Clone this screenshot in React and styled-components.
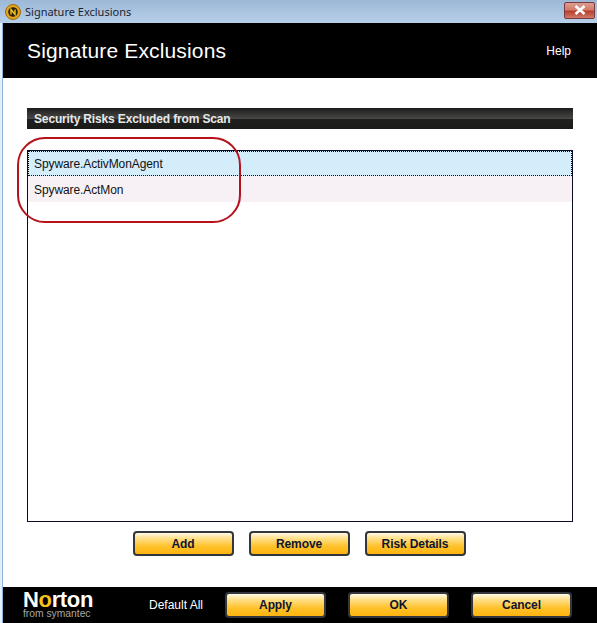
import React from "react";
import styled, { createGlobalStyle } from "styled-components";

const Global = createGlobalStyle`
  html, body { margin: 0; padding: 0; background: #fff; }
  body { font-family: "Liberation Sans", Arial, sans-serif; }
`;

const Frame = styled.div`
  position: relative;
  width: 597px;
  height: 623px;
  overflow: hidden;
  display: flex;
  flex-direction: column;
  background: #e6eef7;
`;

const TitleBar = styled.div`
  height: 23px;
  flex: none;
  display: flex;
  align-items: center;
  padding: 0 2px 0 5px;
  background: linear-gradient(to bottom, #9db8d6 0%, #b7cfe9 100%);
`;

const TitleText = styled.span`
  margin-left: 4px;
  font-family: "Noto Sans", sans-serif;
  font-size: 11px;
  color: #1c2430;
`;

const CloseButton = styled.div`
  margin-left: auto;
  width: 31px;
  height: 17px;
  margin-top: -3px;
  display: flex;
  align-items: center;
  justify-content: center;
  box-sizing: border-box;
  border: 1px solid #7a3a44;
  border-radius: 2px;
  background: linear-gradient(to bottom, #dc9d90 0%, #d27c6c 45%, #b9402c 55%, #cf7a68 100%);
`;

const Window = styled.div`
  flex: 1;
  margin-left: 2px;
  border-left: 1px solid #8fb2dc;
  display: flex;
  flex-direction: column;
  background: #fff;
`;

const Header = styled.header`
  height: 55px;
  flex: none;
  display: flex;
  align-items: center;
  justify-content: space-between;
  padding: 0 26px 0 24px;
  background: #000;
  color: #fff;
`;

const Heading = styled.h1`
  margin: 0;
  font-size: 21px;
  font-weight: 400;
  letter-spacing: 0.15px;
`;

const HelpLink = styled.span`
  font-size: 12px;
`;

const Content = styled.main`
  flex: 1;
  display: flex;
  flex-direction: column;
  padding: 30px 24px 0;
`;

const SectionBar = styled.div`
  height: 21px;
  flex: none;
  display: flex;
  align-items: center;
  padding-left: 7px;
  font-size: 12px;
  font-weight: 700;
  letter-spacing: -0.15px;
  color: #e8e8e8;
  background: linear-gradient(to bottom, #1d1e1c 0%, #474846 50%, #1f201e 52%, #1a1b19 100%);
`;

const List = styled.div`
  height: 372px;
  flex: none;
  margin-top: 21px;
  box-sizing: border-box;
  border: 1px solid #0b0b2a;
  background: #fff;
`;

const Row = styled.div`
  height: ${(p) => (p.$selected ? 25 : 26)}px;
  box-sizing: border-box;
  display: flex;
  align-items: center;
  padding: ${(p) => (p.$selected ? "0 0 0 6px" : "1px 0 0 6px")};
  font-size: 12px;
  letter-spacing: -0.1px;
  color: #111;
  background: ${(p) => (p.$selected ? "#d3edfb" : "#f7f1f6")};
  outline: ${(p) => (p.$selected ? "1px dotted #111" : "none")};
  outline-offset: -1px;
`;

const ActionRow = styled.div`
  display: flex;
  justify-content: center;
  gap: 15px;
  margin: 9px 2px 0 0;
`;

const Button = styled.button`
  width: 101px;
  height: ${(p) => p.$h || 25}px;
  padding: 0;
  box-sizing: border-box;
  border: 2px solid #33363c;
  border-radius: 4px;
  background: linear-gradient(to bottom, #fffbe8 0%, #ffe08a 25%, #ffc128 65%, #fdb40f 100%);
  font-family: "Liberation Sans", Arial, sans-serif;
  font-size: 12px;
  font-weight: 700;
  letter-spacing: -0.1px;
  color: #0f1530;
`;

const Footer = styled.footer`
  height: 36px;
  flex: none;
  margin-top: auto;
  display: flex;
  align-items: center;
  background: #000;
  padding-left: 20px;
`;

const Brand = styled.div`
  width: 126px;
  flex: none;
  color: #fff;
  display: flex;
  flex-direction: column;
`;

const BrandName = styled.div`
  font-size: 22px;
  font-weight: 700;
  line-height: 17px;
  letter-spacing: -0.35px;
`;

const BrandRing = styled.span`
  color: #f7c21c;
`;

const BrandSub = styled.div`
  font-size: 10.3px;
  line-height: 12px;
  color: #a9a9a9;
`;

const DefaultAll = styled.span`
  width: 76px;
  flex: none;
  font-size: 12px;
  color: #fff;
`;

const FooterButtons = styled.div`
  display: flex;
  gap: 22px;
`;

const Annotation = styled.div`
  position: absolute;
  left: 17px;
  top: 137px;
  width: 224px;
  height: 86px;
  box-sizing: border-box;
  border: 2px solid #b5121b;
  border-radius: 28px;
`;

const AppIcon = () => (
  <svg width="16" height="16" viewBox="0 0 16 16">
    <circle cx="8" cy="8" r="7.5" fill="#e8a417" stroke="#9a6a10" />
    <circle cx="8" cy="8" r="4.8" fill="#2a2208" />
    <path d="M6 10.5V5.5L10 10.5V5.5" fill="none" stroke="#f5c52a" strokeWidth="1.4" />
  </svg>
);

const CloseIcon = () => (
  <svg width="14" height="10" viewBox="0 0 14 10">
    <path d="M2.5 1L11.5 9M11.5 1L2.5 9" stroke="#fff" strokeWidth="2.6" />
  </svg>
);

export default function App() {
  return (
    <Frame>
      <Global />
      <TitleBar>
        <AppIcon />
        <TitleText>Signature Exclusions</TitleText>
        <CloseButton>
          <CloseIcon />
        </CloseButton>
      </TitleBar>
      <Window>
        <Header>
          <Heading>Signature Exclusions</Heading>
          <HelpLink>Help</HelpLink>
        </Header>
        <Content>
          <SectionBar>Security Risks Excluded from Scan</SectionBar>
          <List>
            <Row $selected>Spyware.ActivMonAgent</Row>
            <Row>Spyware.ActMon</Row>
          </List>
          <ActionRow>
            <Button>Add</Button>
            <Button>Remove</Button>
            <Button>Risk Details</Button>
          </ActionRow>
        </Content>
        <Footer>
          <Brand>
            <BrandName>
              N<BrandRing>o</BrandRing>rton
            </BrandName>
            <BrandSub>from symantec</BrandSub>
          </Brand>
          <DefaultAll>Default All</DefaultAll>
          <FooterButtons>
            <Button $h={26}>Apply</Button>
            <Button $h={26}>OK</Button>
            <Button $h={26}>Cancel</Button>
          </FooterButtons>
        </Footer>
      </Window>
      <Annotation />
    </Frame>
  );
}
